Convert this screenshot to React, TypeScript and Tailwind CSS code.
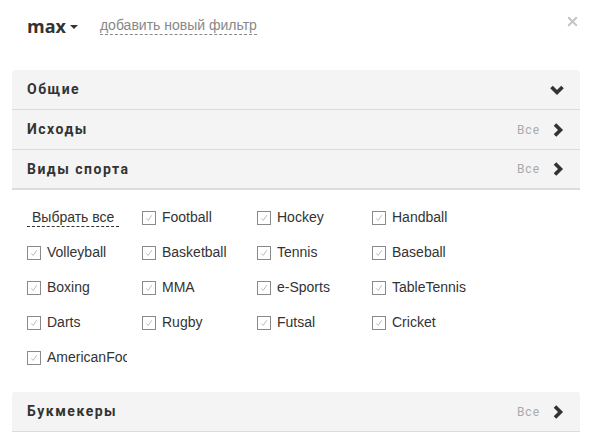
import { X } from "lucide-react"

const sports = [
  "Football",
  "Hockey",
  "Handball",
  "Volleyball",
  "Basketball",
  "Tennis",
  "Baseball",
  "Boxing",
  "MMA",
  "e-Sports",
  "TableTennis",
  "Darts",
  "Rugby",
  "Futsal",
  "Cricket",
  "AmericanFootball",
]

function ChevronRight() {
  return (
    <svg viewBox="0 0 12 14" className="h-[14px] w-[12px]">
      <path d="M3 1.5 L8.5 7 L3 12.5" fill="none" stroke="#333" strokeWidth="3.6" strokeLinejoin="miter" />
    </svg>
  )
}

function ChevronDown() {
  return (
    <svg viewBox="0 0 14 12" className="h-[12px] w-[14px]">
      <path d="M1.5 3 L7 8.5 L12.5 3" fill="none" stroke="#333" strokeWidth="3.6" strokeLinejoin="miter" />
    </svg>
  )
}

function SectionRow({ title, open, all, last }: { title: string; open?: boolean; all?: boolean; last?: string }) {
  return (
    <div className={`flex h-[40px] items-center justify-between bg-[#f4f4f4] pl-[15px] pr-[16px] ${last ?? "border-b border-[#dcdcdc]"}`}>
      <span className="text-[14px] font-bold tracking-[1.5px] text-[#333] [font-family:Roboto,sans-serif]">{title}</span>
      <div className="flex items-center gap-[12px]">
        {all && <span className="text-[12px] tracking-[1px] text-[#aaa] [font-family:Roboto,sans-serif]">Все</span>}
        {open ? <ChevronDown /> : <ChevronRight />}
      </div>
    </div>
  )
}

function Check({ label }: { label: string }) {
  return (
    <label className="flex h-[35px] w-[100px] items-center overflow-hidden whitespace-nowrap pt-[2px]">
      <span className="mr-[6px] flex h-[14px] w-[14px] shrink-0 items-center justify-center border border-[#8a8a8a] bg-white">
        <svg viewBox="0 0 10 10" className="h-[8px] w-[8px]">
          <path d="M1.5 5.5 L4 8 L8.5 1.5" fill="none" stroke="#aaa" strokeWidth="1" />
        </svg>
      </span>
      <span className="text-[14px] text-[#333]">{label}</span>
    </label>
  )
}

export default function App() {
  return (
    <div className="h-[441px] w-[592px] bg-white [font-family:'Liberation_Sans',Arial,sans-serif]">
      {/* top bar */}
      <div className="flex h-[50px] items-center pl-[27px] pr-[12px] pt-[2px]">
        <span className="text-[18px] font-bold text-[#333] [font-family:'Open_Sans',sans-serif]">max</span>
        <span className="ml-[4px] mt-[2px] border-x-[4px] border-t-[4px] border-x-transparent border-t-[#333]" />
        <span className="ml-[22px] border-b border-dashed border-[#888] text-[14px] leading-[17px] text-[#888]">
          добавить новый фильтр
        </span>
        <X className="ml-auto -mt-[10px] h-[15px] w-[15px] text-[#c4c4c4]" strokeWidth={3.2} />
      </div>

      <div className="mx-[12px] mt-[20px]">
        <div className="overflow-hidden rounded-t-[3px]">
          <SectionRow title="Общие" open />
          <SectionRow title="Исходы" all />
          <SectionRow title="Виды спорта" all last="border-b-2 border-[#dcdcdc]" />
        </div>

        <div className="grid grid-cols-[115px_115px_115px_115px] px-[15px] pt-[9px] pb-[18px]">
          <div className="flex h-[35px] items-center pt-[2px]">
            <span className="border-b border-dashed border-[#333] pl-[5px] pr-[5px] text-[14px] leading-[17px] text-[#333]">
              Выбрать все
            </span>
          </div>
          {sports.map((s) => (
            <Check key={s} label={s} />
          ))}
        </div>

        <div className="overflow-hidden rounded-t-[3px]">
          <SectionRow title="Букмекеры" all />
        </div>
      </div>
    </div>
  )
}
